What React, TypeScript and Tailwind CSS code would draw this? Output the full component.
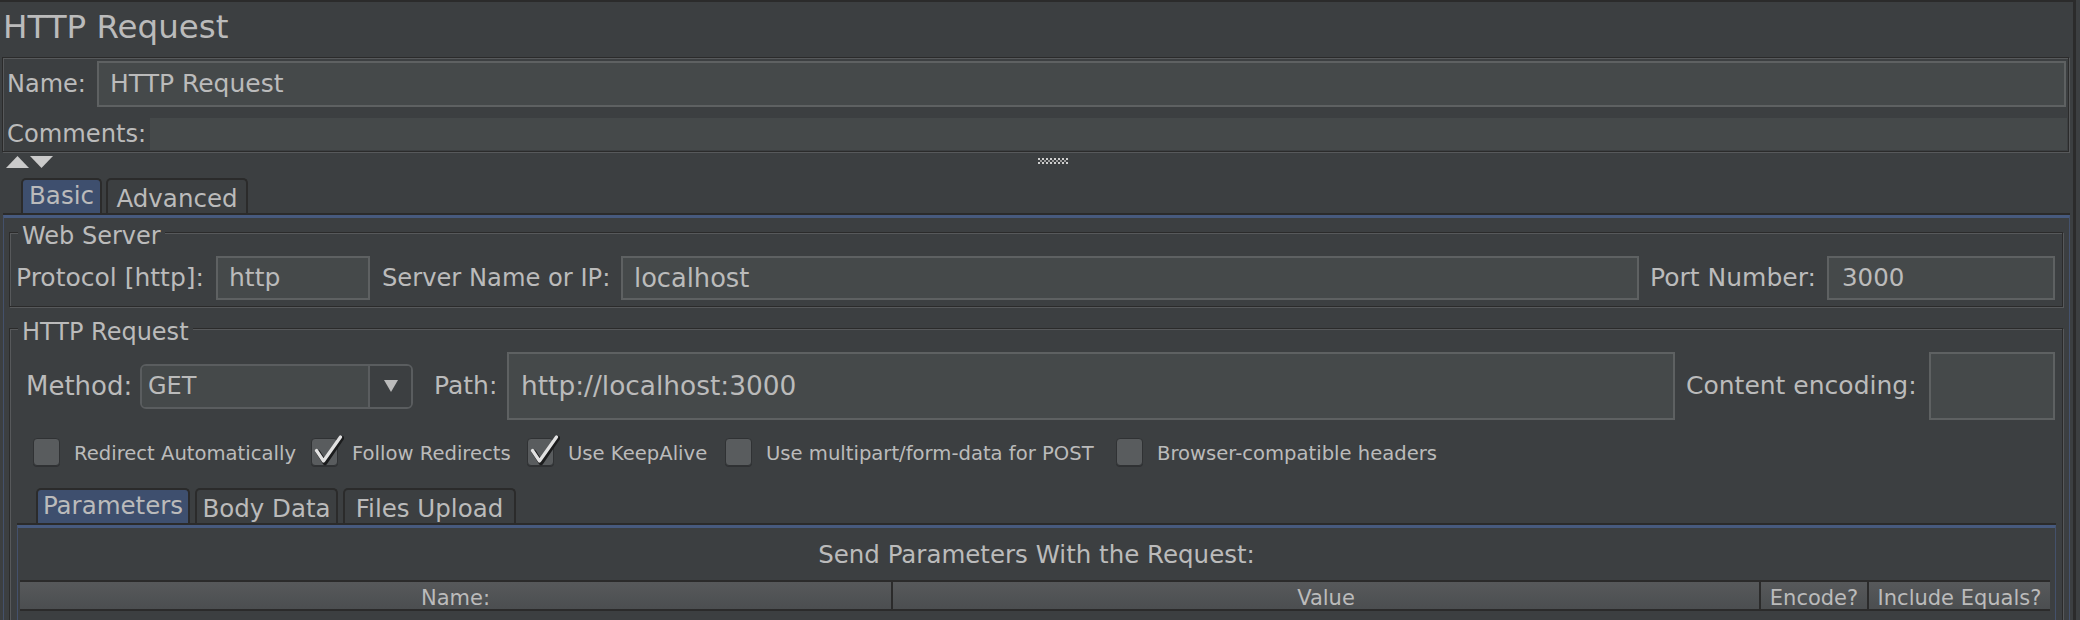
import React from 'react';

// etched border used by the Swing group boxes
const ETCHED = 'border border-[#2b2b2b] shadow-[1px_1px_0_#57595b,inset_1px_1px_0_#57595b]';

function Label({ className = '', children }: { className?: string; children: React.ReactNode }) {
  return <span className={`shrink-0 whitespace-nowrap leading-[28px] ${className}`}>{children}</span>;
}

function Field({ className = '', children }: { className?: string; children?: React.ReactNode }) {
  return (
    <div className={`shrink-0 flex items-center bg-[#45494a] border-2 border-[#5e6162] leading-[28px] whitespace-nowrap ${className}`}>
      {children}
    </div>
  );
}

function GroupBox({ title, className = '', children }: { title: string; className?: string; children: React.ReactNode }) {
  return (
    <div className={`relative shrink-0 ${ETCHED} ${className}`}>
      <span className="absolute left-[8px] -top-[11px] px-[4px] bg-[#3c3f41] text-[24px] leading-[28px]">{title}</span>
      {children}
    </div>
  );
}

function Tab({ label, selected, className = '' }: { label: string; selected?: boolean; className?: string }) {
  return (
    <div
      className={`h-[35px] shrink-0 rounded-t-[5px] border-2 border-b-0 border-[#2b2b2b] flex items-center justify-center text-[24.5px] leading-[28px] ${
        selected ? 'bg-[#3e4f6e] pb-[2px]' : 'pt-[5px]'
      } ${className}`}
    >
      {label}
    </div>
  );
}

function Checkbox({ label, checked, className = '' }: { label: string; checked?: boolean; className?: string }) {
  return (
    <div className={`flex items-center shrink-0 ${className}`}>
      <div className="relative w-[27px] h-[28px] shrink-0 rounded-[4px] bg-[#595c5e] border border-[#303234] shadow-[0_1px_0_#2f3133]">
        {checked && (
          <svg className="absolute left-0 -top-[4px]" width="32" height="32" viewBox="0 0 32 32">
            <path d="M6 17 L13 28 L30 3" fill="none" stroke="#1b1c1d" strokeWidth="4.5" strokeLinecap="round" strokeLinejoin="round" />
            <path d="M4.5 15.5 L11.5 26 L28.5 2" fill="none" stroke="#e2e2e2" strokeWidth="3.2" strokeLinecap="round" strokeLinejoin="round" />
          </svg>
        )}
      </div>
      <span className="ml-[14px] pt-[3px] text-[19.6px] leading-[24px] whitespace-nowrap">{label}</span>
    </div>
  );
}

export default function App() {
  const grip: React.ReactNode[] = [];
  for (let i = 0; i < 8; i++) {
    grip.push(<rect key={`a${i}`} x={i * 4} y={0} width="2" height="2" fill="#cfcfcf" />);
    grip.push(<rect key={`b${i}`} x={i * 4 + 2} y={2} width="2" height="2" fill="#9a9a9a" />);
    grip.push(<rect key={`c${i}`} x={i * 4} y={4} width="2" height="2" fill="#cfcfcf" />);
  }

  return (
    <div className="w-[2080px] h-[620px] overflow-hidden bg-[#3c3f41] text-[#bbbbbb] font-['DejaVu_Sans',sans-serif] flex">
      <div className="w-[2073px] shrink-0 flex flex-col">
        <div className="h-[2px] shrink-0 bg-[#2b2b2b]" />

        {/* title */}
        <div className="h-[55px] shrink-0 pl-[3px] pt-[6px] text-[32.5px] leading-[38px]">HTTP Request</div>

        {/* name / comments */}
        <div className={`ml-[2px] mr-[4px] shrink-0 pt-[3px] pb-[1px] ${ETCHED}`}>
          <div className="flex h-[46px] items-center pl-[4px] pr-[2px]">
            <Label className="w-[90px] text-[24px]">Name:</Label>
            <Field className="flex-1 h-[46px] pl-[11px] text-[25px]">HTTP Request</Field>
          </div>
          <div className="flex h-[32px] mt-[11px] items-center pl-[4px] pr-[1px]">
            <Label className="w-[143px] text-[24.2px]">Comments:</Label>
            <div className="flex-1 h-full bg-[#45494a]" />
          </div>
        </div>

        {/* collapse arrows + splitter grip */}
        <div className="h-[26px] shrink-0 flex items-start">
          <svg className="ml-[6px] mt-[4px]" width="47" height="12" viewBox="0 0 47 12">
            <polygon points="0,12 11.5,0 23,12" fill="#cacaca" />
            <polygon points="24,0 47,0 35.5,12" fill="#cacaca" />
          </svg>
          <svg className="ml-[985px] mt-[6px]" width="30" height="6" viewBox="0 0 30 6">
            {grip}
          </svg>
        </div>

        {/* Basic / Advanced tabbed pane */}
        <div className="ml-[3px] mr-[3px] shrink-0 flex flex-col">
          <div className="flex pl-[18px] shrink-0">
            <Tab label="Basic" selected className="w-[81px]" />
            <Tab label="Advanced" className="w-[142px] ml-[4px]" />
          </div>
          <div className="h-[2px] shrink-0 bg-[#2b2b2b]" />
          <div className="border-t-[3px] border-t-[#475a7e] border-x border-x-[#44516b] pb-[40px]">
            {/* Web Server */}
            <GroupBox title="Web Server" className="mt-[14px] ml-[5px] mr-[6px] pt-[23px] pb-[6px]">
              <div className="flex items-center h-[44px] pl-[6px] pr-[7px]">
                <Label className="w-[187px] text-[25px]">Protocol [http]:</Label>
                <Field className="ml-[13px] w-[154px] h-[44px] pl-[11px] text-[25px]">http</Field>
                <Label className="ml-[12px] w-[226px] text-[24.2px]">Server Name or IP:</Label>
                <Field className="ml-[13px] flex-1 h-[44px] pl-[11px] text-[25.7px]">localhost</Field>
                <Label className="ml-[11px] w-[165px] text-[25px]">Port Number:</Label>
                <Field className="ml-[12px] w-[228px] h-[44px] pl-[13px] text-[24.5px]">3000</Field>
              </div>
            </GroupBox>

            {/* HTTP Request */}
            <GroupBox title="HTTP Request" className="mt-[21px] ml-[5px] mr-[6px] pt-[23px] pb-[40px]">
              <div className="flex items-center h-[68px] pl-[16px] pr-[7px]">
                <Label className="w-[101px] text-[26px]">Method:</Label>
                <div className="ml-[13px] w-[273px] h-[45px] shrink-0 flex rounded-[6px] border-2 border-[#5a5d5f] overflow-hidden">
                  <div className="w-[226px] bg-[#45494a] flex items-center pl-[6px] text-[24px] leading-[28px]">GET</div>
                  <div className="flex-1 border-l-2 border-[#5a5d5f] flex items-center justify-center bg-[#3c3f41]">
                    <svg width="14" height="12" viewBox="0 0 14 12">
                      <polygon points="0,0 14,0 7,12" fill="#bbbbbb" />
                    </svg>
                  </div>
                </div>
                <Label className="ml-[21px] w-[61px] text-[25px]">Path:</Label>
                <Field className="ml-[12px] flex-1 h-[68px] pl-[12px] text-[26.4px]">http://localhost:3000</Field>
                <Label className="ml-[11px] w-[231px] text-[25px]">Content encoding:</Label>
                <Field className="ml-[12px] w-[126px] h-[68px]" />
              </div>

              <div className="flex items-center h-[28px] mt-[18px] pl-[23px]">
                <Checkbox label="Redirect Automatically" className="w-[278px]" />
                <Checkbox label="Follow Redirects" checked className="w-[216px]" />
                <Checkbox label="Use KeepAlive" checked className="w-[198px]" />
                <Checkbox label="Use multipart/form-data for POST" className="w-[391px]" />
                <Checkbox label="Browser-compatible headers" />
              </div>

              {/* Parameters / Body Data / Files Upload */}
              <div className="mt-[22px] ml-[7px] mr-[6px] flex flex-col">
                <div className="flex pl-[19px]">
                  <Tab label="Parameters" selected className="w-[154px]" />
                  <Tab label="Body Data" className="w-[143px] ml-[5px]" />
                  <Tab label="Files Upload" className="w-[173px] ml-[5px]" />
                </div>
                <div className="h-[2px] bg-[#2b2b2b]" />
                <div className="border-t-[3px] border-t-[#475a7e] border-x border-x-[#44516b] pb-[40px]">
                  <div className="pt-[13px] text-center text-[24.5px] leading-[28px]">Send Parameters With the Request:</div>
                  <div className="mt-[11px] ml-[2px] mr-[5px] h-[31px] flex border-y-2 border-[#2b2b2b] bg-gradient-to-b from-[#57595b] to-[#4b4e50] text-[21px] leading-[24px]">
                    <div className="w-[871px] flex items-center justify-center pt-[4px]">Name:</div>
                    <div className="w-[868px] flex items-center justify-center pt-[4px] border-l-2 border-[#2b2b2b]">Value</div>
                    <div className="w-[108px] flex items-center justify-center pt-[4px] border-l-2 border-[#2b2b2b]">Encode?</div>
                    <div className="w-[183px] flex items-center justify-center pt-[4px] border-l-2 border-[#2b2b2b]">Include Equals?</div>
                  </div>
                  <div className="h-[60px]" />
                </div>
              </div>
            </GroupBox>
          </div>
        </div>
      </div>
      <div className="w-[3px] shrink-0 bg-[#2b2b2b]" />
      <div className="flex-1 bg-[#3c3f41]" />
    </div>
  );
}
